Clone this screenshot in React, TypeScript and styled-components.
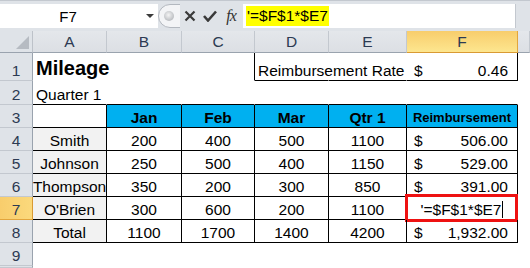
import React from 'react';
import styled, { createGlobalStyle } from 'styled-components';

const GlobalStyle = createGlobalStyle`
  html, body { margin: 0; padding: 0; background: #fff; }
  body { font-family: 'Liberation Sans', Arial, sans-serif; }
`;

const Window = styled.div`
  width: 530px;
  height: 268px;
  overflow: hidden;
  background: #fff;
  display: flex;
  flex-direction: column;
`;

const FormulaBar = styled.div`
  flex: none;
  height: 31px;
  box-sizing: border-box;
  display: flex;
  align-items: stretch;
  padding: 3px 0 3px;
  background: #dfe3e8;
  border-top: 1px solid #c3c8cf;
`;

const NameBox = styled.div`
  width: 158px;
  flex: none;
  background: #fff;
  display: flex;
  align-items: center;
  position: relative;
  font-size: 15px;
  color: #000;
`;

const NameText = styled.span`
  flex: 1;
  text-align: center;
  padding-right: 10px;
`;

const DropArrow = styled.span`
  width: 0;
  height: 0;
  margin-right: 4px;
  border-left: 4px solid transparent;
  border-right: 4px solid transparent;
  border-top: 4px solid #3b3b3b;
`;

const Tools = styled.div`
  width: 85px;
  flex: none;
  display: flex;
  align-items: center;
`;

const ToolIcon = styled.span<{ $w: number }>`
  width: ${(p) => p.$w}px;
  display: flex;
  justify-content: center;
  align-items: center;
  color: #3a3a3a;
`;

const FxLabel = styled.span`
  font-family: 'Liberation Serif', 'Times New Roman', serif;
  font-style: italic;
  font-size: 16px;
  color: #333;
  letter-spacing: -1px;
`;

const FormulaInput = styled.div`
  flex: 1;
  background: #fff;
  display: flex;
  align-items: center;
  padding-left: 3px;
  font-size: 15.5px;
  border-right: 1px solid #c3c8cf;
  margin-right: 14px;
`;

const Highlight = styled.span`
  background: #ffff00;
  padding: 1px;
  line-height: 18px;
`;

const Sheet = styled.div`
  flex: 1;
  display: grid;
  grid-template-columns: 33px 74px 75px 73px 74px 78px 111px 1fr;
  grid-template-rows: 22px 28px 24px repeat(7, 23px) 1fr;
  font-size: 15.5px;
  color: #000;
`;

const Corner = styled.div`
  position: relative;
  box-sizing: border-box;
  background: #dfe3e8;
  border-right: 1px solid #bdc2c9;
  border-bottom: 1px solid #9aa3ae;
  &::after {
    content: '';
    position: absolute;
    right: 3px;
    bottom: 3px;
    width: 0;
    height: 0;
    border-left: 13px solid transparent;
    border-bottom: 13px solid #b6bbc2;
  }
`;

const ColHead = styled.div<{ $active?: boolean }>`
  box-sizing: border-box;
  display: flex;
  align-items: center;
  justify-content: center;
  font-size: 15.5px;
  color: #2c3a52;
  background: ${(p) =>
    p.$active ? 'linear-gradient(#f8cd6c, #fde68f)' : 'linear-gradient(#e4e7eb, #dcdfe4)'};
  border-right: 1px solid ${(p) => (p.$active ? '#e2a53c' : '#c3c8cf')};
  border-bottom: 1px solid ${(p) => (p.$active ? '#d99a33' : '#9aa3ae')};
`;

const RowHead = styled.div<{ $active?: boolean }>`
  box-sizing: border-box;
  display: flex;
  align-items: flex-end;
  justify-content: center;
  line-height: 19px;
  font-size: 15.5px;
  color: #2c3a52;
  background: ${(p) => (p.$active ? 'linear-gradient(90deg, #f8cd6c, #fbd97c)' : '#dfe3e8')};
  border-right: 1px solid ${(p) => (p.$active ? '#d99a33' : '#9aa3ae')};
  border-bottom: 1px solid ${(p) => (p.$active ? '#e2a53c' : '#c3c8cf')};
`;

type Align = 'left' | 'center' | 'right' | 'acct';

const Cell = styled.div<{
  $align?: Align;
  $bold?: boolean;
  $fill?: string;
  $br?: boolean;
  $bb?: boolean;
  $size?: number;
}>`
  position: relative;
  box-sizing: border-box;
  display: flex;
  align-items: flex-end;
  justify-content: ${(p) =>
    p.$align === 'center'
      ? 'center'
      : p.$align === 'right'
        ? 'flex-end'
        : p.$align === 'acct'
          ? 'space-between'
          : 'flex-start'};
  padding: ${(p) => (p.$align === 'acct' ? '0 9px 0 7px' : '0 3px')};
  line-height: ${(p) => ((p.$size || 15.5) > 18 ? 23 : 18)}px;
  font-size: ${(p) => p.$size || 15.5}px;
  font-weight: ${(p) => (p.$bold ? 700 : 400)};
  white-space: nowrap;
  background: ${(p) => p.$fill || 'transparent'};
  border-right: 1px solid ${(p) => (p.$br ? '#000' : 'transparent')};
  border-bottom: 1px solid ${(p) => (p.$bb ? '#000' : 'transparent')};
`;

const EditCell = styled(Cell)`
  &::after {
    content: '';
    position: absolute;
    top: -3px;
    bottom: -3px;
    left: -2px;
    right: -1px;
    border: 3px solid #ee1111;
  }
`;

const Caret = styled.span`
  display: inline-block;
  width: 1px;
  height: 17px;
  background: #000;
  margin-left: 1px;
  vertical-align: -3px;
`;

const BLUE = '#00b0f0';
const GRAY = '#f2f2f2';

const cols = ['A', 'B', 'C', 'D', 'E', 'F'];

const people = [
  { name: 'Smith', v: ['200', '400', '500', '1100'], amt: '506.00' },
  { name: 'Johnson', v: ['250', '500', '400', '1150'], amt: '529.00' },
  { name: 'Thompson', v: ['350', '200', '300', '850'], amt: '391.00' },
  { name: "O'Brien", v: ['300', '600', '200', '1100'], amt: null },
  { name: 'Total', v: ['1100', '1700', '1400', '4200'], amt: '1,932.00' },
];

function CloseIcon() {
  return (
    <svg width="12" height="12" viewBox="0 0 12 12">
      <path d="M1.5 1.5 L10.5 10.5 M10.5 1.5 L1.5 10.5" stroke="#3a3a3a" strokeWidth="2.2" />
    </svg>
  );
}

function CheckIcon() {
  return (
    <svg width="14" height="12" viewBox="0 0 14 12">
      <path d="M1 6 L5 10.5 L13 1.5" stroke="#3a3a3a" strokeWidth="2.6" fill="none" />
    </svg>
  );
}

function Knob() {
  return (
    <svg width="22" height="24" viewBox="0 0 22 24">
      <defs>
        <radialGradient id="kb" cx="0.45" cy="0.4" r="0.6">
          <stop offset="0" stopColor="#f4f4f4" />
          <stop offset="1" stopColor="#b9bcc0" />
        </radialGradient>
      </defs>
      <path d="M22 0.5 H12 A11.5 11.5 0 0 0 12 23.5 H22" fill="#f3f4f6" stroke="#b3b8bf" />
      <circle cx="11" cy="12" r="5" fill="url(#kb)" />
    </svg>
  );
}

export default function App() {
  return (
    <Window>
      <GlobalStyle />
      <FormulaBar>
        <NameBox>
          <NameText>F7</NameText>
          <DropArrow />
        </NameBox>
        <Tools>
          <Knob />
          <ToolIcon $w={20}>
            <CloseIcon />
          </ToolIcon>
          <ToolIcon $w={19}>
            <CheckIcon />
          </ToolIcon>
          <ToolIcon $w={24}>
            <FxLabel>fx</FxLabel>
          </ToolIcon>
        </Tools>
        <FormulaInput>
          <Highlight>'=$F$1*$E7</Highlight>
        </FormulaInput>
      </FormulaBar>

      <Sheet>
        <Corner />
        {cols.map((c) => (
          <ColHead key={c} $active={c === 'F'}>
            {c}
          </ColHead>
        ))}
        <ColHead />

        {/* row 1 */}
        <RowHead>1</RowHead>
        <Cell $bold $size={20}>
          Mileage
        </Cell>
        <Cell />
        <Cell $br />
        <Cell $bb>Reimbursement Rate</Cell>
        <Cell $bb />
        <Cell $align="acct" $bb $br>
          <span>$</span>
          <span>0.46</span>
        </Cell>
        <Cell />

        {/* row 2 */}
        <RowHead>2</RowHead>
        <Cell $bb>Quarter 1</Cell>
        {cols.slice(1).map((c) => (
          <Cell key={c} $bb />
        ))}
        <Cell />

        {/* row 3 */}
        <RowHead>3</RowHead>
        <Cell $br $bb />
        {['Jan', 'Feb', 'Mar', 'Qtr 1'].map((h) => (
          <Cell key={h} $align="center" $bold $fill={BLUE} $br $bb>
            {h}
          </Cell>
        ))}
        <Cell $align="center" $bold $size={13} $fill={BLUE} $br $bb>
          Reimbursement
        </Cell>
        <Cell />

        {people.map((p, i) => (
          <React.Fragment key={p.name}>
            <RowHead $active={i === 3}>{i + 4}</RowHead>
            <Cell $align="center" $fill={GRAY} $br $bb>
              {p.name}
            </Cell>
            {p.v.map((v, j) => (
              <Cell key={j} $align="center" $br $bb>
                {v}
              </Cell>
            ))}
            {p.amt ? (
              <Cell $align="acct" $br $bb>
                <span>$</span>
                <span>{p.amt}</span>
              </Cell>
            ) : (
              <EditCell $align="center" $br $bb>
                <span>
                  '=$F$1*$E7
                  <Caret />
                </span>
              </EditCell>
            )}
            <Cell />
          </React.Fragment>
        ))}

        <RowHead>9</RowHead>
        {cols.map((c) => (
          <Cell key={c} />
        ))}
        <Cell />
        {/* row 10 is only a sliver at the bottom edge */}
        <RowHead />
      </Sheet>
    </Window>
  );
}
